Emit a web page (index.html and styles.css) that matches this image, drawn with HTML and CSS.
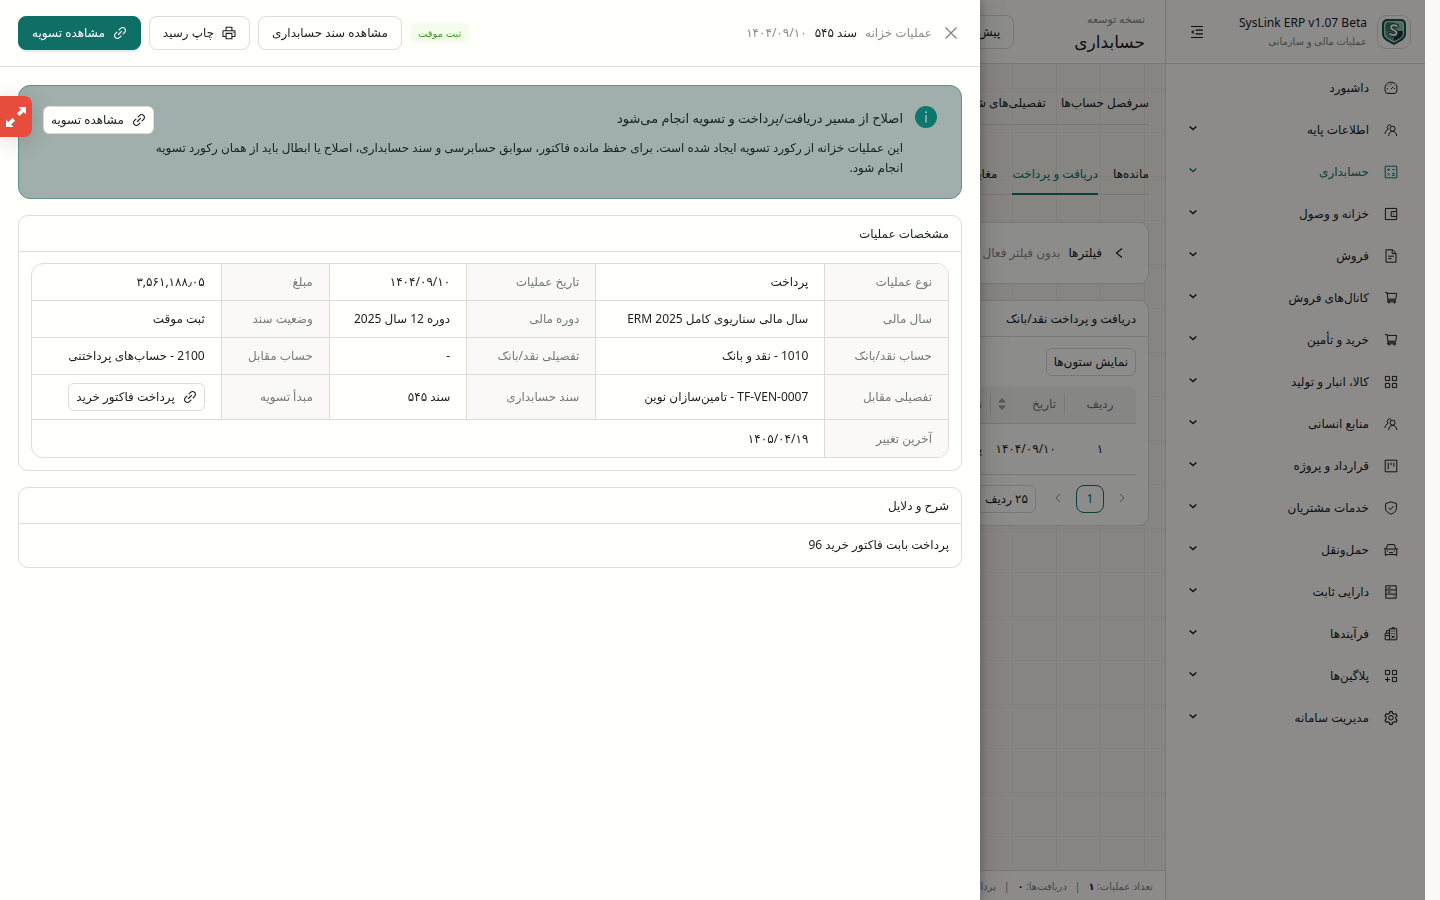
FILE: index.html
```html
<!DOCTYPE html>
<html lang="fa" dir="rtl">

<head>
    <meta charset="UTF-8">
    <meta name="viewport" content="width=device-width, initial-scale=1.0">
    <title>SysLink ERP - حسابداری</title>
    <link rel="stylesheet" href="styles.css">
</head>

<body>
    <svg class="sprite" aria-hidden="true">
        <symbol id="i-link" viewBox="64 64 896 896"><path fill="currentColor" d="M574 665.4a8.03 8.03 0 00-11.3 0L446.5 781.6c-53.8 53.8-144.6 59.5-204 0-59.5-59.5-53.8-150.2 0-204l116.2-116.2c3.1-3.1 3.1-8.2 0-11.3l-39.8-39.8a8.03 8.03 0 00-11.3 0L191.4 526.5c-84.6 84.6-84.6 221.5 0 306s221.5 84.6 306 0l116.2-116.2c3.1-3.1 3.1-8.2 0-11.3L574 665.4zm258.6-474c-84.6-84.6-221.5-84.6-306 0L410.3 307.6a8.03 8.03 0 000 11.3l39.7 39.7c3.1 3.1 8.2 3.1 11.3 0l116.2-116.2c53.8-53.8 144.6-59.5 204 0 59.5 59.5 53.8 150.2 0 204L665.3 562.6a8.03 8.03 0 000 11.3l39.8 39.8c3.1 3.1 8.2 3.1 11.3 0l116.2-116.2c84.5-84.6 84.5-221.5 0-306.1zM610.1 372.3a8.03 8.03 0 00-11.3 0L372.3 598.7a8.03 8.03 0 000 11.3l39.6 39.6c3.1 3.1 8.2 3.1 11.3 0l226.4-226.4c3.1-3.1 3.1-8.2 0-11.3l-39.5-39.6z"/></symbol>
        <symbol id="i-print" viewBox="64 64 896 896"><path fill="currentColor" d="M820 436h-40c-4.4 0-8 3.6-8 8v40c0 4.4 3.6 8 8 8h40c4.4 0 8-3.6 8-8v-40c0-4.4-3.6-8-8-8zm32-104H732V120c0-4.4-3.6-8-8-8H300c-4.4 0-8 3.6-8 8v212H172c-44.2 0-80 35.8-80 80v328c0 17.7 14.3 32 32 32h168v132c0 4.4 3.6 8 8 8h424c4.4 0 8-3.6 8-8V772h168c17.7 0 32-14.3 32-32V412c0-44.2-35.8-80-80-80zM360 180h304v152H360V180zm304 664H360V568h304v276zm200-140H732V500H292v204H160V412c0-6.6 5.4-12 12-12h680c6.6 0 12 5.4 12 12v292z"/></symbol>
        <symbol id="i-setting" viewBox="64 64 896 896"><path fill="currentColor" d="M924.8 625.7l-65.5-56c3.1-19 4.7-38.4 4.7-57.8s-1.6-38.8-4.7-57.8l65.5-56a32.03 32.03 0 009.3-35.2l-.9-2.6a443.74 443.74 0 00-79.7-137.9l-1.8-2.1a32.12 32.12 0 00-35.1-9.5l-81.3 28.9c-30-24.6-63.5-44-99.7-57.6l-15.7-85a32.05 32.05 0 00-25.8-25.7l-2.7-.5c-52.1-9.4-106.9-9.4-159 0l-2.7.5a32.05 32.05 0 00-25.8 25.7l-15.8 85.4a351.86 351.86 0 00-99 57.4l-81.9-29.1a32 32 0 00-35.1 9.5l-1.8 2.1a446.02 446.02 0 00-79.7 137.9l-.9 2.6c-4.5 12.5-.8 26.5 9.3 35.2l66.3 56.6c-3.1 18.8-4.6 38-4.6 57.1 0 19.2 1.5 38.4 4.6 57.1L99 625.5a32.03 32.03 0 00-9.3 35.2l.9 2.6c18.1 50.4 44.9 96.9 79.7 137.9l1.8 2.1a32.12 32.12 0 0035.1 9.5l81.9-29.1c29.8 24.5 63.1 43.9 99 57.4l15.8 85.4a32.05 32.05 0 0025.8 25.7l2.7.5a449.4 449.4 0 00159 0l2.7-.5a32.05 32.05 0 0025.8-25.7l15.7-85a350 350 0 0099.7-57.6l81.3 28.9a32 32 0 0035.1-9.5l1.8-2.1c34.8-41.1 61.6-87.5 79.7-137.9l.9-2.6c4.5-12.3.8-26.3-9.3-35zM788.3 465.9c2.5 15.1 3.8 30.6 3.8 46.1s-1.3 31-3.8 46.1l-6.6 40.1 74.7 63.9a370.03 370.03 0 01-42.6 73.6L721 702.8l-31.4 25.8c-23.9 19.6-50.5 35-79.3 45.8l-38.1 14.3-17.9 97a377.5 377.5 0 01-85 0l-17.9-97.2-37.8-14.5c-28.5-10.8-55-26.2-78.7-45.7l-31.4-25.9-93.4 33.2c-17-22.9-31.2-47.6-42.6-73.6l75.5-64.5-6.5-40c-2.4-14.9-3.7-30.3-3.7-45.5 0-15.3 1.2-30.6 3.7-45.5l6.5-40-75.5-64.5c11.3-26.1 25.6-50.7 42.6-73.6l93.4 33.2 31.4-25.9c23.7-19.5 50.2-34.9 78.7-45.7l37.9-14.3 17.9-97.2c28.1-3.2 56.8-3.2 85 0l17.9 97 38.1 14.3c28.7 10.8 55.4 26.2 79.3 45.8l31.4 25.8 92.8-32.9c17 22.9 31.2 47.6 42.6 73.6L781.8 426l6.5 39.9zM512 326c-97.2 0-176 78.8-176 176s78.8 176 176 176 176-78.8 176-176-78.8-176-176-176zm79.2 255.2A111.6 111.6 0 01512 614c-29.9 0-58-11.7-79.2-32.8A111.6 111.6 0 01400 502c0-29.9 11.7-58 32.8-79.2C454 401.6 482.1 390 512 390c29.9 0 58 11.6 79.2 32.8A111.6 111.6 0 01624 502c0 29.9-11.7 58-32.8 79.2z"/></symbol>
        <symbol id="i-dash" viewBox="0 0 14 14"><path class="ln" d="M2.6 12.4C-.6 9 .6 1.200 7 1.200S14.600 9 11.400 12.400zM7 8.200l2.400-2.600M7 2.800v1.200M2.800 7.600H4M10 7.600h1.200M4 4.400l.8.800"/></symbol>
        <symbol id="i-team" viewBox="0 0 14 14"><path class="ln" d="M8.6 3.2a2.5 2.5 0 1 1 0 5 2.5 2.5 0 1 1 0-5M4.6 13c.2-2.6 1.6-4.6 4-4.6s4 2 4.2 4.6M7.2 2.4A2.4 2.4 0 1 0 4.2 6.2M1 11c.1-2.2 1.2-4 3.2-4.6"/></symbol>
        <symbol id="i-account" viewBox="0 0 14 14"><path class="ln" d="M1.2 1.2h11.6v11.6H1.2zM3.4 4.7h2.4M4.6 3.5v2.4M8.2 4.7h2.6M3.6 8.4l2 2M5.6 8.4l-2 2M8.2 8.6h2.6M8.2 10.4h2.6"/></symbol>
        <symbol id="i-wallet" viewBox="0 0 14 14"><path class="ln" d="M12.6 4.4V1.4H1.4v11.2h11.2V9.6M12.8 4.6H7.2v4.8h5.6zM9.2 7h1"/></symbol>
        <symbol id="i-file" viewBox="0 0 14 14"><path class="ln" d="M2 .8h6.6L12 4.2v9H2zM8.2.9v3.7h3.7M4.2 7.2h5.6M4.2 9.6h3.4"/></symbol>
        <symbol id="i-cart" viewBox="0 0 14 14"><path class="ln" d="M1 1.600h2.200l.8 7.600h8M3.400 2.400h9.200l-.8 5.800H4M4 9.200l-.6 1.600h8.800M5 12.200a.6.6 0 1 0 0-1.200.6.6 0 1 0 0 1.200M10.400 12.200a.6.6 0 1 0 0-1.200.6.6 0 1 0 0 1.200"/></symbol>
        <symbol id="i-apps" viewBox="0 0 14 14"><path class="ln" d="M1.4 1.4h4.2v4.2H1.4zM8.4 1.4h4.2v4.2H8.4zM1.4 8.4h4.2v4.2H1.4zM8.4 8.4h4.2v4.2H8.4z"/></symbol>
        <symbol id="i-project" viewBox="0 0 14 14"><path class="ln" d="M1.2 1.2h11.6v11.6H1.2zM4.2 3.6v6.6M7 3.6v2.6M9.8 3.6v4"/></symbol>
        <symbol id="i-shield" viewBox="0 0 14 14"><path class="ln" d="M7 .8l5.4 1.8v5.2c0 2.4-2.6 4.2-5.4 5.4-2.8-1.2-5.4-3-5.4-5.4V2.6zM4.6 6.8l1.8 1.8 3.2-3.6"/></symbol>
        <symbol id="i-car" viewBox="0 0 14 14"><path class="ln" d="M1.200 6h11.600v5.600H1.200zM2.200 5.800L3.600 1.600h6.800l1.400 4.200M.2 5l1 1M13.800 5l-1 1M3 8h1.200M9.800 8H11M5 9.600h4M1.700 11.600v1.600M12.300 11.600v1.600"/></symbol>
        <symbol id="i-db" viewBox="0 0 14 14"><path class="ln" d="M1.8.8h10.4v12.4H1.8zM1.8 4.9h10.4M1.8 9.1h10.4M3.8 2.9h3M3.8 7h3M9.4 11.1h1"/></symbol>
        <symbol id="i-org" viewBox="0 0 14 14"><path class="ln" d="M5.600 1.800h7.200v11H5.600zM5.600 12.800H1.200V6.200h4.400M2.600 6V3.600h3M8 1.800V.8h2.400v1M7.400 4.200h1.200M9.800 4.200H11M7.400 6.600h1.200M9.800 6.600H11M7.600 8.800l3 2.200M10.600 8.800l-3 2.200M1.400 8.600h4"/></symbol>
        <symbol id="i-plug" viewBox="0 0 14 14"><path class="ln" d="M1.4 1.4h4.2v4.2H1.4zM8.4 1.4h4.2v4.2H8.4zM8.4 8.4h4.2v4.2H8.4zM3.5 8v5M1 10.5h5"/></symbol>
        <symbol id="i-down" viewBox="0 0 10 10"><path fill="none" stroke="currentColor" stroke-width="1.400" d="M1.6 3.400L5 6.600l3.400-3.200"/></symbol>
    </svg>

    <div class="app">
        <aside class="sidebar">
            <div class="brand">
                <span class="logo">
                    <svg viewBox="0 0 24 26" width="24" height="26">
                        <path fill="#0b5a4b" d="M5 0h14a5 5 0 0 1 5 5v10c0 6-7 8-12 11C7 23 0 21 0 15V5a5 5 0 0 1 5-5z"/>
                        <path fill="#e8efe9" d="M5.500 2.200h13a3.300 3.300 0 0 1 3.300 3.300V15c0 4.300-5.300 5.800-9.800 8.500C7.500 20.800 2.200 19.300 2.200 15V5.500a3.300 3.300 0 0 1 3.300-3.300z"/>
                        <path fill="#3d7d68" d="M6 3.200h6V12H3.200V6A2.800 2.800 0 0 1 6 3.200z"/>
                        <path fill="#8fbf9f" d="M12 3.200h6A2.800 2.800 0 0 1 20.800 6v6H12z"/>
                        <path fill="#26313a" d="M12 12h8.800v3c0 3.600-4.800 5-8.800 7.300z"/>
                        <path fill="#5f8f7c" d="M3.200 12H12v10.300C8 20 3.200 18.600 3.200 15z"/>
                        <path fill="none" stroke="#0b5a4b" stroke-width="4" stroke-linecap="round" d="M15 7c-2-1.300-6-1.300-6 1.400 0 3 5.500 2.400 5.500 5.300 0 2.800-4 2.800-6.500 1.400"/>
                        <path fill="none" stroke="#f2f6f2" stroke-width="2" stroke-linecap="round" d="M15 7c-2-1.300-6-1.300-6 1.400 0 3 5.500 2.400 5.500 5.300 0 2.800-4 2.800-6.500 1.400"/>
                    </svg>
                </span>
                <div class="brand-text">
                    <strong>SysLink ERP v1.07 Beta</strong>
                    <small>عملیات مالی و سازمانی</small>
                </div>
                <button class="fold" aria-label="بستن منو">
                    <svg viewBox="0 0 14 14" width="14" height="14"><path fill="none" stroke="currentColor" stroke-width="1.200" d="M1 1.500h12M5.500 5.200H13M5.500 8.800H13M1 12.500h12"/><path fill="currentColor" d="M1 7l2.600-2v4z"/></svg>
                </button>
            </div>
            <nav class="menu">
                <a href="#"><svg class="ic"><use href="#i-dash"/></svg><span>داشبورد</span></a>
                <a href="#"><svg class="ic"><use href="#i-team"/></svg><span>اطلاعات پایه</span><svg class="arrow"><use href="#i-down"/></svg></a>
                <a href="#" class="active"><svg class="ic"><use href="#i-account"/></svg><span>حسابداری</span><svg class="arrow"><use href="#i-down"/></svg></a>
                <a href="#"><svg class="ic"><use href="#i-wallet"/></svg><span>خزانه و وصول</span><svg class="arrow"><use href="#i-down"/></svg></a>
                <a href="#"><svg class="ic"><use href="#i-file"/></svg><span>فروش</span><svg class="arrow"><use href="#i-down"/></svg></a>
                <a href="#"><svg class="ic"><use href="#i-cart"/></svg><span>کانال‌های فروش</span><svg class="arrow"><use href="#i-down"/></svg></a>
                <a href="#"><svg class="ic"><use href="#i-cart"/></svg><span>خرید و تأمین</span><svg class="arrow"><use href="#i-down"/></svg></a>
                <a href="#"><svg class="ic"><use href="#i-apps"/></svg><span>کالا، انبار و تولید</span><svg class="arrow"><use href="#i-down"/></svg></a>
                <a href="#"><svg class="ic"><use href="#i-team"/></svg><span>منابع انسانی</span><svg class="arrow"><use href="#i-down"/></svg></a>
                <a href="#"><svg class="ic"><use href="#i-project"/></svg><span>قرارداد و پروژه</span><svg class="arrow"><use href="#i-down"/></svg></a>
                <a href="#"><svg class="ic"><use href="#i-shield"/></svg><span>خدمات مشتریان</span><svg class="arrow"><use href="#i-down"/></svg></a>
                <a href="#"><svg class="ic"><use href="#i-car"/></svg><span>حمل‌ونقل</span><svg class="arrow"><use href="#i-down"/></svg></a>
                <a href="#"><svg class="ic"><use href="#i-db"/></svg><span>دارایی ثابت</span><svg class="arrow"><use href="#i-down"/></svg></a>
                <a href="#"><svg class="ic"><use href="#i-org"/></svg><span>فرآیندها</span><svg class="arrow"><use href="#i-down"/></svg></a>
                <a href="#"><svg class="ic"><use href="#i-plug"/></svg><span>پلاگین‌ها</span><svg class="arrow"><use href="#i-down"/></svg></a>
                <a href="#"><svg class="ic"><use href="#i-setting"/></svg><span>مدیریت سامانه</span><svg class="arrow"><use href="#i-down"/></svg></a>
            </nav>
        </aside>

        <main class="main">
            <header class="topbar">
                <div class="page-title">
                    <small>نسخه توسعه</small>
                    <h1>حسابداری</h1>
                </div>
                <button class="btn">پیش‌نمایش</button>
            </header>
            <div class="content">
                <nav class="tabs">
                    <a href="#">سرفصل حساب‌ها</a>
                    <a href="#">تفصیلی‌های شناور</a>
                </nav>
                <nav class="tabs sub">
                    <a href="#">مانده‌ها</a>
                    <a href="#" class="active">دریافت و پرداخت</a>
                    <a href="#">مغایرت</a>
                </nav>
                <section class="box filters">
                    <svg viewBox="0 0 10 12" width="10" height="12"><path fill="none" stroke="currentColor" stroke-width="1.200" d="M8 1.500L2.500 6 8 10.500"/></svg>
                    <b>فیلترها</b>
                    <span>بدون فیلتر فعال</span>
                </section>
                <section class="box">
                    <h2>دریافت و پرداخت نقد/بانک</h2>
                    <div class="box-body">
                        <button class="btn small">نمایش ستون‌ها</button>
                        <table class="list">
                            <thead>
                                <tr>
                                    <th class="c-row">ردیف</th>
                                    <th class="c-date">
                                        <div class="sort">تاریخ
                                            <svg viewBox="0 0 8 12" width="8" height="12"><path fill="currentColor" d="M4 0l4 4.500H0zM4 12L0 7.500h8z"/></svg>
                                        </div>
                                    </th>
                                    <th>نوع</th>
                                </tr>
                            </thead>
                            <tbody>
                                <tr>
                                    <td class="c-row">۱</td>
                                    <td>۱۴۰۴/۰۹/۱۰</td>
                                    <td>پرداخت</td>
                                </tr>
                            </tbody>
                        </table>
                        <div class="pager">
                            <button class="pg" aria-label="قبلی"><svg viewBox="0 0 8 10" width="8" height="10"><path fill="none" stroke="currentColor" d="M2 1l4 4-4 4"/></svg></button>
                            <button class="pg current">1</button>
                            <button class="pg" aria-label="بعدی"><svg viewBox="0 0 8 10" width="8" height="10"><path fill="none" stroke="currentColor" d="M6 1L2 5l4 4"/></svg></button>
                            <select class="btn small" aria-label="تعداد ردیف">
                                <option>۲۵ ردیف</option>
                                <option>۵۰ ردیف</option>
                            </select>
                        </div>
                    </div>
                </section>
            </div>
            <footer class="status">
                <span>تعداد عملیات: <b>۱</b></span><i>|</i>
                <span>دریافت‌ها: <b>۰</b></span><i>|</i>
                <span>پرداخت‌ها: <b>۱</b></span>
            </footer>
        </main>
        <div class="mask"></div>
    </div>

    <section class="drawer" role="dialog" aria-label="سند ۵۴۵">
        <header class="drawer-head">
            <button class="close" aria-label="بستن">
                <svg viewBox="0 0 12 12" width="12" height="12"><path fill="none" stroke="currentColor" stroke-width="1.300" d="M.5.5l11 11M11.500.5l-11 11"/></svg>
            </button>
            <div class="drawer-title">
                <span>عملیات خزانه</span>
                <strong>سند ۵۴۵</strong>
                <span>۱۴۰۴/۰۹/۱۰</span>
            </div>
            <div class="actions">
                <span class="tag">ثبت موقت</span>
                <button class="btn">مشاهده سند حسابداری</button>
                <button class="btn"><svg class="ic"><use href="#i-print"/></svg>چاپ رسید</button>
                <button class="btn primary"><svg class="ic"><use href="#i-link"/></svg>مشاهده تسویه</button>
            </div>
        </header>

        <div class="drawer-body">
            <div class="alert">
                <svg class="info" viewBox="0 0 22 22" width="22" height="22"><circle cx="11" cy="11" r="11" fill="#0f766e"/><path fill="#a8bfbb" d="M10.300 9h1.400v7.500h-1.400z"/><circle cx="11" cy="6.200" r="1" fill="#a8bfbb"/></svg>
                <div class="alert-text">
                    <h3>اصلاح از مسیر دریافت/پرداخت و تسویه انجام می‌شود</h3>
                    <p>این عملیات خزانه از رکورد تسویه ایجاد شده است. برای حفظ مانده فاکتور، سوابق حسابرسی و سند حسابداری، اصلاح یا ابطال باید از همان رکورد تسویه انجام شود.</p>
                </div>
                <button class="btn small"><svg class="ic"><use href="#i-link"/></svg>مشاهده تسویه</button>
            </div>

            <section class="box">
                <h2>مشخصات عملیات</h2>
                <div class="box-body">
                    <table class="details">
                        <colgroup>
                            <col class="w1"><col class="w2"><col class="w3"><col class="w4"><col class="w5"><col class="w6">
                        </colgroup>
                        <tr>
                            <th>نوع عملیات</th><td>پرداخت</td>
                            <th>تاریخ عملیات</th><td>۱۴۰۴/۰۹/۱۰</td>
                            <th>مبلغ</th><td>۳,۵۶۱,۱۸۸٫۰۵</td>
                        </tr>
                        <tr>
                            <th>سال مالی</th><td>سال مالی سناریوی کامل ERM 2025</td>
                            <th>دوره مالی</th><td>دوره 12 سال 2025</td>
                            <th>وضعیت سند</th><td>ثبت موقت</td>
                        </tr>
                        <tr>
                            <th>حساب نقد/بانک</th><td>1010 - نقد و بانک</td>
                            <th>تفصیلی نقد/بانک</th><td>-</td>
                            <th>حساب مقابل</th><td>2100 - حساب‌های پرداختنی</td>
                        </tr>
                        <tr>
                            <th>تفصیلی مقابل</th><td>TF-VEN-0007 - تامین‌سازان نوین</td>
                            <th>سند حسابداری</th><td>سند ۵۴۵</td>
                            <th>مبدأ تسویه</th><td><button class="btn small"><svg class="ic"><use href="#i-link"/></svg>پرداخت فاکتور خرید</button></td>
                        </tr>
                        <tr>
                            <th>آخرین تغییر</th><td colspan="5">۱۴۰۵/۰۴/۱۹</td>
                        </tr>
                    </table>
                </div>
            </section>

            <section class="box">
                <h2>شرح و دلایل</h2>
                <div class="box-body">
                    <p>پرداخت بابت فاکتور خرید 96</p>
                </div>
            </section>
        </div>
    </section>

    <button class="expand" aria-label="تمام صفحه">
        <svg viewBox="0 0 20 20" width="20" height="20"><path fill="#fff" d="M12.500 0H20v7.500l-2.400-2.400-4 4-2.700-2.700 4-4zM7.500 20H0v-7.500l2.400 2.400 4-4 2.700 2.700-4 4z"/></svg>
    </button>
</body>

</html>
```
FILE: styles.css
```css
* {
    box-sizing: border-box;
}

body {
    margin: 0;
    padding-right: 15px;
    font-family: "Noto Sans", "DejaVu Sans", sans-serif;
    font-size: 12px;
    line-height: 20px;
    color: #17201e;
    background: #faf9f5;
}

h1, h2, h3, p {
    margin: 0;
    font-weight: 400;
}

a {
    color: inherit;
    text-decoration: none;
}

button,
select {
    font: inherit;
    color: inherit;
    cursor: pointer;
}

.sprite {
    position: absolute;
    width: 0;
    height: 0;
}

.ln {
    fill: none;
    stroke: currentColor;
    stroke-width: 1;
}

.ic {
    width: 14px;
    height: 14px;
    flex: none;
}

.btn {
    display: inline-flex;
    align-items: center;
    gap: 8px;
    height: 34px;
    padding: 0 13px;
    border: 1px solid #dedbd5;
    border-radius: 8px;
    background: #fffffc;
    white-space: nowrap;
}

.btn.small {
    height: 28px;
    padding: 0 7px;
    border-radius: 6px;
}

.btn.primary {
    color: #fff;
    font-weight: 500;
    background: #0f6f66;
    border-color: #0f6f66;
    box-shadow: 0 2px 0 rgba(15, 118, 110, .12);
}

/* page behind the drawer */
.app {
    position: relative;
    display: flex;
    height: 100vh;
    overflow: hidden;
}

.mask {
    position: absolute;
    inset: 0;
    background: rgba(0, 0, 0, .45);
}

.sidebar {
    width: 260px;
    flex: none;
    background: #fffefb;
    border-left: 1px solid #dedbd5;
}

.brand {
    display: flex;
    align-items: center;
    gap: 10px;
    height: 64px;
    padding: 0 14px 0 24px;
    border-bottom: 1px solid #dedbd5;
}

.logo {
    display: flex;
    align-items: center;
    justify-content: center;
    width: 34px;
    height: 34px;
    border: 1px solid #dedbd5;
    border-radius: 9px;
}

.brand-text {
    flex: 1;
    line-height: 18px;
}

.brand-text strong,
.brand-text small {
    display: block;
    font-weight: 400;
}

.brand-text small {
    font-size: 10px;
    color: #7d8380;
}

.page-title small {
    display: block;
    font-size: 11px;
    color: #7d8380;
}

.fold {
    display: flex;
    padding: 0;
    border: 0;
    background: none;
}

.menu {
    padding-top: 3px;
}

.menu a {
    display: flex;
    align-items: center;
    gap: 15px;
    height: 42px;
    padding: 0 27px 0 22px;
}

.menu span {
    flex: 1;
}

.menu .arrow {
    width: 10px;
    height: 10px;
    margin-bottom: 4px;
}

.menu .active {
    color: #0f766e;
}

.main {
    flex: 1;
    min-width: 0;
    display: flex;
    flex-direction: column;
    background-color: #f4f2ec;
    background-image: linear-gradient(rgba(90, 90, 70, .05) 1px, transparent 1px), linear-gradient(90deg, rgba(90, 90, 70, .05) 1px, transparent 1px);
    background-size: 44px 44px;
}

.topbar {
    display: flex;
    align-items: center;
    gap: 60px;
    height: 64px;
    padding: 0 20px;
    background: #fffefb;
    border-bottom: 1px solid #dedbd5;
}

.page-title h1 {
    font-size: 17px;
    line-height: 26px;
}

.content {
    flex: 1;
    padding: 18px 16px;
}

.tabs {
    display: flex;
    gap: 15px;
    height: 43px;
    border-bottom: 1px solid #dedbd5;
    white-space: nowrap;
}

.tabs a {
    padding-top: 11px;
}

.tabs.sub {
    height: 42px;
    margin: 28px 0 27px;
}

.tabs .active {
    height: 42px;
    color: #0f766e;
    border-bottom: 2px solid #0f766e;
}

.box {
    margin-bottom: 16px;
    border: 1px solid #e0ddd8;
    border-radius: 10px;
    background: #fffffc;
}

.box h2 {
    padding: 8px 12px 7px;
    font-size: 12px;
    line-height: 20px;
    border-bottom: 1px solid #e0ddd8;
}

.box-body {
    padding: 11px 12px 12px;
}

.filters {
    display: flex;
    align-items: center;
    gap: 8px;
    height: 62px;
    padding: 0 24px;
}

.filters b {
    margin-right: 4px;
    font-weight: 500;
}

.filters span {
    color: #8a8e8b;
}

.list {
    width: 100%;
    margin-top: 10px;
    border-collapse: collapse;
    table-layout: fixed;
    text-align: right;
}

.list th {
    height: 37px;
    padding: 0 8px;
    font-weight: 400;
    color: #6f7673;
    background: linear-gradient(#dedbd5, #dedbd5) left center / 1px 20px no-repeat #f5f4f0;
    border-bottom: 1px solid #dedbd5;
}

.list th:first-child {
    border-top-right-radius: 8px;
}

.list td {
    height: 51px;
    padding: 0 8px;
    border-bottom: 1px solid #dedbd5;
}

.list .c-row {
    width: 72px;
    text-align: center;
}

.list .c-date {
    width: 74px;
}

.sort {
    display: flex;
    align-items: center;
    justify-content: space-between;
}

.sort svg {
    color: #9a9d9a;
}

.pager {
    display: flex;
    align-items: center;
    gap: 4px;
    margin-top: 10px;
}

.pg {
    width: 28px;
    height: 28px;
    padding: 0;
    border: 0;
    background: none;
    color: #8a8e8b;
}

.pg.current {
    color: #0f766e;
    border: 1px solid #0f766e;
    border-radius: 8px;
}

.pager .btn {
    width: 100px;
    margin-right: 4px;
    appearance: none;
}

.status {
    display: flex;
    align-items: center;
    gap: 8px;
    height: 30px;
    padding: 0 12px;
    font-size: 10px;
    color: #7d8380;
    background: #fffefb;
    border-top: 1px solid #dedbd5;
}

.status b {
    color: #17201e;
}

.status i {
    font-style: normal;
}

/* drawer */
.drawer {
    position: fixed;
    top: 0;
    bottom: 0;
    left: 0;
    width: 980px;
    max-width: 100%;
    background: #fffffc;
    box-shadow: 6px 0 16px rgba(0, 0, 0, .08), 3px 0 6px rgba(0, 0, 0, .12), 9px 0 28px rgba(0, 0, 0, .05);
}

.drawer-head {
    display: flex;
    align-items: center;
    gap: 13px;
    height: 67px;
    padding: 0 23px 0 18px;
    border-bottom: 1px solid #e0ddd8;
}

.close {
    display: flex;
    padding: 0;
    border: 0;
    background: none;
    color: #7d8380;
}

.drawer-title {
    display: flex;
    flex: 1;
    gap: 8px;
    color: #8a8e8b;
}

.drawer-title strong {
    font-weight: 500;
    color: #17201e;
}

.actions {
    display: flex;
    align-items: center;
    gap: 8px;
}

.tag {
    padding: 0 8px;
    font-size: 10px;
    color: #4a9a2f;
    background: #f4fdec;
    border-radius: 6px;
}

.drawer-body {
    padding: 18px;
}

.alert {
    display: flex;
    align-items: flex-start;
    margin-bottom: 16px;
    padding: 20px 24px;
    border: 1px solid #5f9089;
    border-radius: 12px;
    background: #a0afac;
}

.alert .info {
    flex: none;
    margin-left: 12px;
}

.alert-text {
    flex: 1;
}

.alert h3 {
    margin-bottom: 8px;
    font-size: 13px;
    line-height: 24px;
}

.details {
    width: 100%;
    table-layout: fixed;
    border: 1px solid #dedbd5;
    border-radius: 12px;
    border-collapse: separate;
    border-spacing: 0;
    overflow: hidden;
    text-align: right;
}

.details th,
.details td {
    height: 37px;
    padding: 8px 16px;
    font-weight: 400;
    border-left: 1px solid #dedbd5;
    border-bottom: 1px solid #dedbd5;
}

.details th {
    color: #737a77;
    background: #faf9f7;
}

.details td:last-child {
    border-left: 0;
}

.details tr:last-child > * {
    border-bottom: 0;
}

.details .btn {
    vertical-align: top;
}

.w1 { width: 13.5%; }
.w2 { width: 25%; }
.w3 { width: 14.1%; }
.w4 { width: 15%; }
.w5 { width: 11.8%; }
.w6 { width: 20.6%; }

.expand {
    position: fixed;
    top: 96px;
    left: 0;
    display: flex;
    align-items: center;
    justify-content: center;
    width: 32px;
    height: 41px;
    padding: 0;
    border: 0;
    border-radius: 0 8px 8px 0;
    background: #e74c3c;
    box-shadow: 0 4px 24px rgba(0, 0, 0, .15);
}
```
